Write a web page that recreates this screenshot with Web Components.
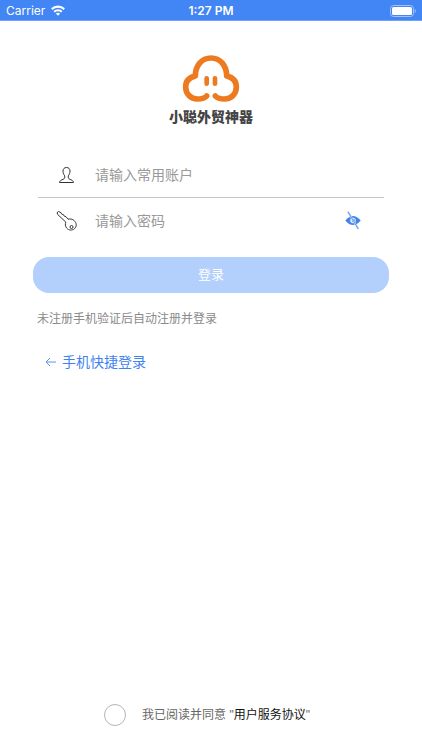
<!DOCTYPE html>
<html lang="zh-CN">
<head>
<meta charset="utf-8">
<meta name="viewport" content="width=device-width, initial-scale=1">
<title>登录</title>
<style>
html, body { height: 100%; margin: 0; }
body { background: #fff; font-family: "Liberation Sans", "Noto Sans CJK SC", sans-serif; color: #666; }
</style>
</head>
<body>
<login-page></login-page>
<script>
function define(name, html, setup) {
  const template = document.createElement('template');
  template.innerHTML = html;
  customElements.define(name, class extends HTMLElement {
    constructor() {
      super();
      this.attachShadow({ mode: 'open' }).append(template.content.cloneNode(true));
    }
    connectedCallback() { if (setup) setup(this, this.shadowRoot); }
  });
}

define('status-bar', `
<style>
:host { display: grid; grid-template-columns: 1fr auto 1fr; align-items: center; height: 21px; padding: 1px 6px 0; box-sizing: border-box; background: #4285f4; border-bottom: 1px solid #72a3f7; color: #fff; font: 12px/18px Inter, sans-serif; }
.left { display: flex; align-items: center; gap: 6px; }
time { font-weight: 600; }
.battery { justify-self: end; }
svg { display: block; }
</style>
<div class="left"><span>Carrier</span>
<svg width="14" height="11" viewBox="0 0 14 11" fill="none" stroke="#fff" stroke-width="2.200" aria-hidden="true"><path d="M.8 4.1C4.3.8 9.7.8 13.2 4.1M3.2 6.800c2.200-2 5.400-2 7.600 0"/><path d="M7 10.7 4.900 8.600c1.200-1.100 3-1.100 4.200 0Z" fill="#fff" stroke="none"/></svg></div>
<time>1:27 PM</time>
<svg class="battery" width="26" height="12" viewBox="0 0 26 12" aria-hidden="true"><rect x=".5" y=".5" width="23" height="11" rx="3" fill="none" stroke="#a0c2fa"/><rect x="2" y="2" width="20" height="8" rx="1.5" fill="#fff"/><path d="M24.7 4c1.5.6 1.5 3.4 0 4Z" fill="#a0c2fa"/></svg>`);

define('brand-logo', `
<style>
:host { display: flex; flex-direction: column; align-items: center; gap: 4px; }
svg { display: block; }
h1 { margin: 0; font-size: 14px; line-height: 20px; font-weight: 900; color: #444; }
</style>
<svg width="58" height="49" viewBox="66 27 174 147" fill="none" stroke="#ee7a20" stroke-width="17" stroke-linecap="round" stroke-linejoin="round" aria-hidden="true">
<path d="M140 153C134 160 124 162 112 162C92 162 77 146 77 126C77 109 88 97 106 93C106 62 125 39 153 39C181 39 200 62 200 93C218 97 229 109 229 126C229 146 214 162 194 162C181 162 172 160 166 153"/>
<path d="M140 100v16M165 100v16" stroke-width="14"/></svg>
<h1><slot></slot></h1>`);

define('text-field', `
<style>
:host { display: flex; align-items: center; height: 45px; padding: 0 20px 0 18px; }
label { display: flex; align-items: center; flex: 1; min-width: 0; gap: 17px; }
input { flex: 1; min-width: 0; padding: 0; border: 0; outline: 0; background: none; color: #333; font: 14px/24px "Liberation Sans", "Noto Sans CJK SC", sans-serif; }
input::placeholder { color: #999; opacity: 1; }
</style>
<label><slot name="icon"></slot><input></label><slot name="action"></slot>`, (host, root) => {
  const input = root.querySelector('input');
  input.type = host.getAttribute('type') || 'text';
  input.placeholder = host.getAttribute('placeholder');
  input.setAttribute('aria-label', input.placeholder);
});

define('submit-button', `
<style>
:host { display: block; }
button { display: block; width: 100%; height: 36px; padding: 0; border: 0; border-radius: 16px; background: #b3cffb; color: #fff; font: 13px/20px "Liberation Sans", "Noto Sans CJK SC", sans-serif; }
</style>
<button type="button"><slot></slot></button>`);

define('agreement-check', `
<style>
:host { display: flex; justify-content: center; align-items: center; gap: 16px; padding-right: 8px; font-size: 12px; line-height: 22px; }
input { appearance: none; flex: none; width: 22px; height: 22px; margin: 0; border: 1px solid #b5b5b5; border-radius: 50%; background: #fff; }
input:checked { background: #4285f4; }
a { color: #111; text-decoration: none; }
span { white-space: pre; }
</style>
<input type="checkbox" id="agree"><span><label for="agree">我已阅读并同意</label> "<a href="#terms">用户服务协议</a>"</span>`);

define('login-page', `
<style>
:host { display: flex; flex-direction: column; min-height: 100vh; }
main { flex: 1; display: flex; flex-direction: column; padding: 33px 33px 24px; }
.fields { margin: 25px 5px 0; }
.fields text-field:first-child { border-bottom: 1px solid #c4c4c4; }
.icon { display: block; flex: none; width: 22px; height: 22px; }
.eye { display: block; padding: 0; border: 0; background: none; }
.eye svg { display: block; }
submit-button { margin-top: 14px; }
p { margin: 15px 4px 0; font-size: 12px; line-height: 22px; color: #8a8a8a; }
.phone { align-self: flex-start; display: flex; align-items: center; gap: 6px; margin: 20px 12px 0; font-size: 14px; line-height: 24px; color: #3f82ee; text-decoration: none; }
agreement-check { margin-top: auto; }
</style>
<status-bar></status-bar>
<main>
<brand-logo>小聪外贸神器</brand-logo>
<div class="fields">
<text-field placeholder="请输入常用账户"><svg slot="icon" class="icon" viewBox="0 0 22 22" fill="none" stroke="#333" stroke-linejoin="round" aria-hidden="true"><path d="M10.500 3.500C8.200 3.500 7 5 7 7c0 2 .7 3.600 1.700 4.800.3 2.200-.3 3-1.500 3.500-2 .8-3.400 1.200-3.700 3.200h14c-.3-2-1.700-2.400-3.700-3.200-1.200-.5-1.800-1.300-1.500-3.500C13.300 10.600 14 9 14 7c0-2-1.200-3.500-3.500-3.500Z"/></svg></text-field>
<text-field type="password" placeholder="请输入密码"><svg slot="icon" class="icon" viewBox="0 0 22 22" fill="none" stroke="#333" stroke-linejoin="round" aria-hidden="true"><path d="M1 2.700 2.500 1.500 5 2.700l.8 1.500 1.700.5.800 1.500 1.700.5 2 2.500c2-.5 4.500-.2 6.200 1.400 2.600 2.500 2.600 5.800.4 8-2.400 2.200-6 1.800-7.900-.5-1.500-1.800-1.700-4-.9-6L1.700 4.500Z"/><circle cx="15.500" cy="17" r="1.500"/></svg><button slot="action" class="eye" type="button" aria-label="显示密码"><svg width="22" height="22" viewBox="0 0 22 22" aria-hidden="true"><path d="M3.300 10.500Q11 1.500 18.700 10.500 11 19.500 3.300 10.500Z" fill="#4384ea"/><circle cx="11" cy="10.500" r="2.800" fill="#dce9fd"/><circle cx="11.500" cy="10.500" r="1.500" fill="#4384ea"/><path d="M6 1.800 16.300 19" stroke="#b9d2f9" stroke-width="2"/><path d="M6 1.800 16.300 19" stroke="#6c9fee"/></svg></button></text-field>
</div>
<submit-button>登录</submit-button>
<p>未注册手机验证后自动注册并登录</p>
<a class="phone" href="#phone"><svg width="11" height="10" viewBox="0 0 11 10" fill="none" stroke="#5b94ef" aria-hidden="true"><path d="M11 5H1M5 1 1 5l4 4"/></svg>手机快捷登录</a>
<agreement-check></agreement-check>
</main>`);
</script>
</body>
</html>
